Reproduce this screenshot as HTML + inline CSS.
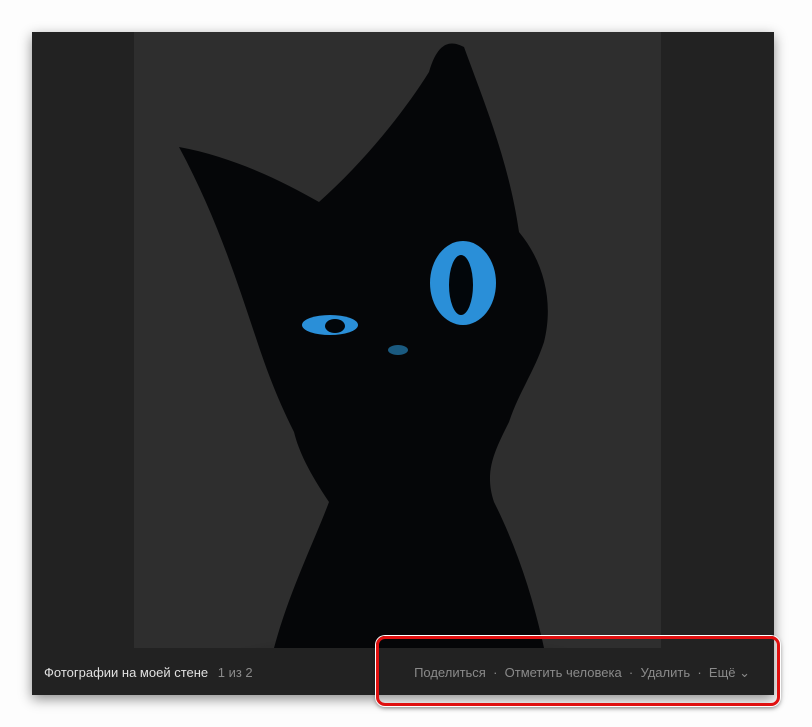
<!DOCTYPE html>
<html><head><meta charset="utf-8"><style>
body{margin:0;width:812px;height:727px;background:#fdfdfd;position:relative;overflow:hidden;font-family:"Liberation Sans",sans-serif}
.panel{position:absolute;left:32px;top:32px;width:742px;height:663px;background:#222;box-shadow:0 4px 12px rgba(0,0,0,.45)}
.img{position:absolute;left:102px;top:0;width:527px;height:616px;background:#2e2e2e;overflow:hidden}
.bar{position:absolute;left:0;top:616px;width:742px;height:47px;background:#222;font-size:13px}
.t{position:absolute;top:17px;color:#e0e0e0}
.r{position:absolute;top:17px;right:24px;color:#8a8a8a}
.red{position:absolute;left:376px;top:636px;width:398px;height:64px;border:3px solid #e01010;border-radius:9px;box-shadow:0 0 0 1px #fff,0 2px 5px rgba(0,0,0,.5)}
</style></head><body>
<div class="panel">
<div class="img">
<svg width="527" height="616" viewBox="0 0 527 616">
<defs><radialGradient id="g" cx="0.5" cy="1" r="0.6"><stop offset="0" stop-color="#000" stop-opacity=".6"/><stop offset="1" stop-color="#000" stop-opacity="0"/></radialGradient></defs>
<ellipse cx="270" cy="610" rx="220" ry="60" fill="url(#g)"/>
<path d="M45 115 C100 125 150 150 185 170 C230 130 270 80 295 40 C305 5 320 10 330 15 C350 70 375 130 385 200 C410 230 420 270 410 310 C400 340 385 360 375 390 C360 420 350 440 360 470 C385 520 400 570 410 616 L140 616 C155 560 180 510 195 470 C175 440 165 420 160 400 C140 360 130 330 120 300 C100 240 80 180 45 115Z" fill="#050608"/>
<ellipse cx="329" cy="251" rx="33" ry="42" fill="#2a8fd8"/>
<ellipse cx="327" cy="253" rx="12" ry="30" fill="#02060a"/>
<ellipse cx="196" cy="293" rx="28" ry="10" fill="#2a8fd8"/>
<ellipse cx="201" cy="294" rx="10" ry="7" fill="#02060a"/>
<ellipse cx="264" cy="318" rx="10" ry="5" fill="#1a5a80"/>
</svg>
</div>
<div class="bar">
<span class="t" style="left:12px">Фотографии на моей стене <span style="color:#8a8a8a;margin-left:6px">1 из 2</span></span>
<span class="r">Поделиться &nbsp;·&nbsp; Отметить человека &nbsp;·&nbsp; Удалить &nbsp;·&nbsp; Ещё ⌄</span>
</div>
</div>
<div class="red"></div>
</body></html>
